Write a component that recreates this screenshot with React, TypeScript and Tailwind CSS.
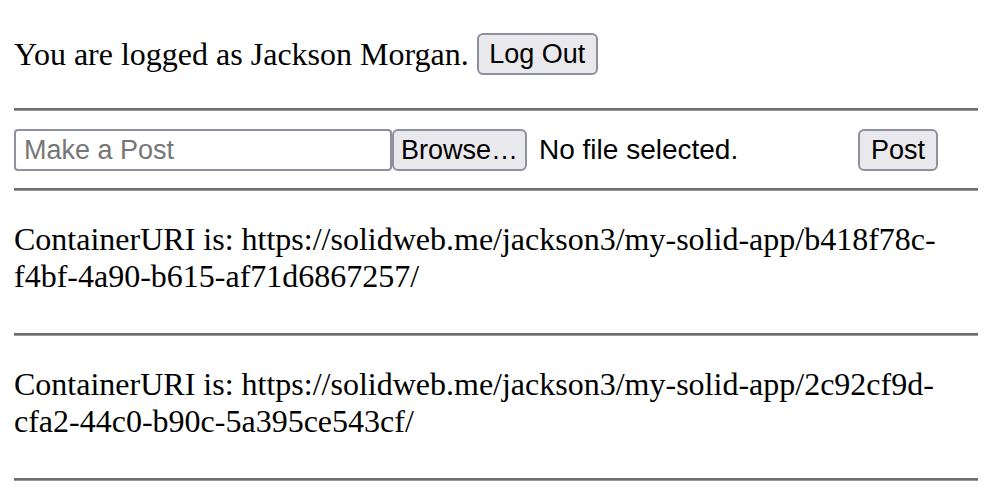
import React from 'react';

const posts = [
  'https://solidweb.me/jackson3/my-solid-app/b418f78c-f4bf-4a90-b615-af71d6867257/',
  'https://solidweb.me/jackson3/my-solid-app/2c92cf9d-cfa2-44c0-b90c-5a395ce543cf/',
];

const btn =
  "h-[42px] rounded-[6px] border-2 border-[#8f8f9d] bg-[#e9e9ed] text-[27px] leading-none text-black font-['Liberation_Sans',Arial,sans-serif]";

const Rule = ({ className = '' }: { className?: string }) => (
  <div className={`h-[3px] bg-[#6e6e6e] border-b border-[#9a9a9a] ${className}`} />
);

export default function App() {
  return (
    <div className="min-h-screen bg-white px-[14px] font-['Liberation_Serif','Times_New_Roman',serif] text-black">
      {/* login status */}
      <div className="mt-[33px] flex h-[42px] items-center">
        <span className="text-[32px] leading-none">You are logged as Jackson Morgan.</span>
        <button className={`${btn} ml-[8px] w-[121px]`}>Log Out</button>
      </div>

      <Rule className="mt-[33px]" />

      {/* new post form */}
      <div className="mt-[18px] flex h-[42px] items-center">
        <input
          placeholder="Make a Post"
          className="h-[42px] w-[378px] rounded-[4px] border-2 border-[#8f8f9d] bg-white px-[8px] text-[27px] font-['Liberation_Sans',Arial,sans-serif] placeholder:text-[#767676] outline-none"
        />
        <button className={`${btn} w-[135px]`}>Browse…</button>
        <span className="ml-[12px] w-[319px] text-[28px] font-['Liberation_Sans',Arial,sans-serif]">No file selected.</span>
        <button className={`${btn} w-[80px]`}>Post</button>
      </div>

      <Rule className="mt-[17px]" />

      {posts.map((uri) => (
        <div key={uri}>
          <p className="mt-[30px] text-[32px] leading-[37px] break-words">ContainerURI is: {uri}</p>
          <Rule className="mt-[38px]" />
        </div>
      ))}
    </div>
  );
}
